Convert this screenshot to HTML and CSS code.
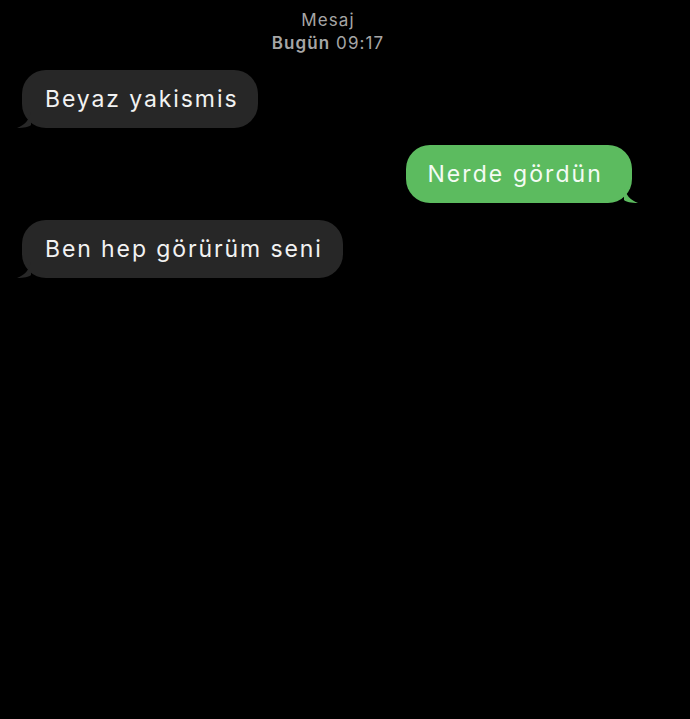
FILE: index.html
```html
<!DOCTYPE html>
<html lang="tr">
<head>
<meta charset="utf-8">
<link rel="stylesheet" href="styles.css">
</head>
<body>
<div class="screen">
  <header class="header">
    <div class="title">Mesaj</div>
    <div class="time"><b>Bugün</b> 09:17</div>
  </header>
  <div class="thread">
    <div class="row in">
      <div class="bubble gray">Beyaz yakismis
        <svg class="tail tail-left" width="14" height="16" viewBox="0 0 14 16"><path d="M14 0 C12 8 8 13 0 16 C7 16 12 15 14 13 Z" fill="#272727"/></svg>
      </div>
    </div>
    <div class="row out">
      <div class="bubble green">Nerde gördün
        <svg class="tail tail-right" width="14" height="16" viewBox="0 0 14 16"><path d="M0 0 C2 8 6 13 14 16 C7 16 2 15 0 13 Z" fill="#5cbb5f"/></svg>
      </div>
    </div>
    <div class="row in">
      <div class="bubble gray">Ben hep görürüm seni
        <svg class="tail tail-left" width="14" height="16" viewBox="0 0 14 16"><path d="M14 0 C12 8 8 13 0 16 C7 16 12 15 14 13 Z" fill="#272727"/></svg>
      </div>
    </div>
  </div>
</div>
</body>
</html>
```
FILE: styles.css
```css
html, body {
  margin: 0;
  padding: 0;
  background: #000;
}
.screen {
  width: 690px;
  height: 719px;
  background: #000;
  font-family: Inter, "Noto Sans", sans-serif;
  overflow: hidden;
}
.header {
  padding-top: 9px;
  padding-right: 34px;
  text-align: center;
  color: #a6a6a6;
  font-size: 17px;
  line-height: 23px;
  letter-spacing: 1.1px;
}
.time b {
  font-weight: 600;
}
.thread {
  display: flex;
  flex-direction: column;
  gap: 17px;
  padding: 15px 58px 0 22px;
}
.row {
  display: flex;
}
.row.out {
  justify-content: flex-end;
}
.bubble {
  position: relative;
  height: 58px;
  box-sizing: border-box;
  display: flex;
  align-items: center;
  padding: 0 20px 0 23px;
  border-radius: 24px;
  font-size: 23px;
  letter-spacing: 1.9px;
  color: #f2f2f2;
}
.gray {
  background: #272727;
}
.green {
  background: #5cbb5f;
  color: #f4fbf4;
  padding: 0 29px 0 21px;
  letter-spacing: 2.1px;
}
.tail {
  position: absolute;
  bottom: 0;
}
.tail-left {
  left: -5px;
}
.tail-right {
  right: -6px;
}
```
